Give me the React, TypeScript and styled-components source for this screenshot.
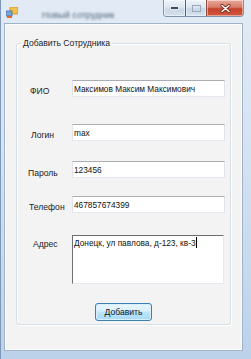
import styled, { createGlobalStyle } from 'styled-components';

const GlobalStyle = createGlobalStyle`
  html, body {
    margin: 0;
    padding: 0;
  }
  body {
    width: 251px;
    height: 359px;
    overflow: hidden;
    font-family: 'Liberation Sans', Arial, sans-serif;
    font-size: 8.6px;
  }
`;

const Window = styled.div`
  width: 251px;
  height: 359px;
  box-sizing: border-box;
  display: flex;
  flex-direction: column;
  background: linear-gradient(180deg, #e2ebf5 0%, #d6e3f1 40%, #bcd2ea 100%);
  border-left: 1px solid #7d98b8;
`;

const TitleBar = styled.div`
  height: 23px;
  display: flex;
  align-items: flex-start;
  flex-shrink: 0;
`;

const AppIcon = styled.svg`
  margin: 7px 0 0 5px;
  flex-shrink: 0;
`;

const Caption = styled.div`
  margin: 10px 0 0 24px;
  color: #56687e;
  font-size: 9px;
  filter: blur(1.3px);
  flex: 1;
`;

const CaptionButtons = styled.div`
  display: flex;
  margin-right: 7px;
  border: 1px solid #7f93ab;
  border-top: none;
  border-radius: 0 0 4px 4px;
  overflow: hidden;
  height: 16px;
`;

const CaptionButton = styled.div<{ $w: number; $close?: boolean }>`
  width: ${(p) => p.$w}px;
  height: 16px;
  display: flex;
  align-items: center;
  justify-content: center;
  box-shadow: inset 0 0 0 1px rgba(255, 255, 255, 0.45);
  background: ${(p) =>
    p.$close
      ? 'linear-gradient(180deg, #eaa99b 0%, #d87c67 45%, #c4432b 55%, #d4593d 100%)'
      : 'linear-gradient(180deg, #eef3f9 0%, #dde6f1 45%, #c8d7e8 55%, #d5e1ed 100%)'};
  & + & {
    border-left: 1px solid ${(p) => (p.$close ? '#8c4a40' : '#95a7bd')};
  }
`;

const Client = styled.div`
  flex: 1;
  margin: 0 8px 8px 3px;
  background: #f3f3f3;
  border: 1px solid #9fb3c9;
  box-shadow: inset 0 0 0 1px #fafcfe;
  display: flex;
  flex-direction: column;
`;

const GroupBox = styled.fieldset`
  margin: 13px 11px 0 11px;
  padding: 0 0 11px 0;
  height: 288px;
  box-sizing: border-box;
  border: 1px solid #d5dfe5;
  border-radius: 3px;
  box-shadow: inset 1px 1px 0 #ffffff, 1px 1px 0 #ffffff;
  display: flex;
  flex-direction: column;
`;

const Legend = styled.legend`
  margin-left: 4px;
  padding: 0 2px;
  font-size: 8.6px;
  line-height: 12px;
  color: #222;
`;

const Row = styled.div<{ $top: number }>`
  display: grid;
  grid-template-columns: 55px 153px;
  margin-top: ${(p) => p.$top}px;
`;

const Label = styled.label<{ $indent: number; $drop?: number }>`
  padding-left: ${(p) => p.$indent}px;
  padding-top: ${(p) => p.$drop ?? 5}px;
  font-size: 8.6px;
  line-height: 12px;
  color: #222;
`;

const TextBox = styled.input`
  box-sizing: border-box;
  width: 153px;
  height: 17px;
  margin: 0;
  padding: 0 1px;
  font-family: inherit;
  font-size: 8.3px;
  color: #111;
  background: #fff;
  border: 1px solid #e2e3ea;
  border-top-color: #abadb3;
  border-bottom-color: #e3e9ef;
  outline: none;
`;

const MemoBox = styled.div`
  box-sizing: border-box;
  width: 152px;
  height: 49px;
  padding: 1px 0 0 1px;
  font-size: 8.3px;
  line-height: 12px;
  color: #111;
  background: #fff;
  border: 1px solid #e3e9ef;
  border-top-color: #6e6e6e;
  border-left-color: #6e6e6e;
`;

const Caret = styled.span`
  display: inline-block;
  width: 1px;
  height: 11px;
  background: #000;
  vertical-align: -2px;
`;

const Button = styled.button`
  align-self: center;
  margin-top: 19px;
  width: 57px;
  height: 18px;
  padding: 0;
  font-family: inherit;
  font-size: 8.6px;
  color: #111;
  border: 1px solid #3c7fb1;
  border-radius: 3px;
  box-shadow: inset 0 0 0 1px #d8f0fc;
  background: linear-gradient(180deg, #eaf6fd 0%, #d9f0fc 45%, #bee6fd 50%, #a7d9f5 100%);
`;

function WinIcon() {
  return (
    <AppIcon width="12" height="11" viewBox="0 0 12 11">
      <rect x="4" y="0" width="8" height="7" fill="#f2c14e" stroke="#c98f1c" strokeWidth="0.8" />
      <rect x="0" y="4" width="6" height="5" fill="#7aa3d6" stroke="#3e6ea8" strokeWidth="0.8" />
      <rect x="1" y="9" width="5" height="2" fill="#e36a2a" />
    </AppIcon>
  );
}

export default function App() {
  return (
    <>
      <GlobalStyle />
      <Window>
        <TitleBar>
          <WinIcon />
          <Caption>Новый сотрудник</Caption>
          <CaptionButtons>
            <CaptionButton $w={21}>
              <svg width="9" height="4" viewBox="0 0 9 4">
                <rect x="0.5" y="0.5" width="8" height="3" fill="#3b4a5c" stroke="#fff" strokeWidth="0.8" />
              </svg>
            </CaptionButton>
            <CaptionButton $w={20}>
              <svg width="9" height="7" viewBox="0 0 9 7">
                <rect x="0.5" y="0.5" width="8" height="6" fill="none" stroke="#9aa9b8" strokeWidth="1" />
              </svg>
            </CaptionButton>
            <CaptionButton $w={36} $close>
              <svg width="11" height="9" viewBox="0 0 11 9">
                <path d="M2 1.5 L9 7.5 M9 1.5 L2 7.5" stroke="#6a2418" strokeWidth="3" strokeLinecap="round" />
                <path d="M2 1.5 L9 7.5 M9 1.5 L2 7.5" stroke="#fff" strokeWidth="1.6" strokeLinecap="round" />
              </svg>
            </CaptionButton>
          </CaptionButtons>
        </TitleBar>
        <Client>
          <GroupBox>
            <Legend>Добавить Сотрудника</Legend>
            <Row $top={31}>
              <Label $indent={13}>ФИО</Label>
              <TextBox readOnly value="Максимов Максим Максимович" />
            </Row>
            <Row $top={27}>
              <Label $indent={14}>Логин</Label>
              <TextBox readOnly value="max" />
            </Row>
            <Row $top={20}>
              <Label $indent={11} $drop={6}>Пароль</Label>
              <TextBox readOnly value="123456" />
            </Row>
            <Row $top={17}>
              <Label $indent={12}>Телефон</Label>
              <TextBox readOnly value="467857674399" />
            </Row>
            <Row $top={22}>
              <Label $indent={16} $drop={3}>Адрес</Label>
              <MemoBox role="textbox">
                Донецк, ул павлова, д-123, кв-3<Caret />
              </MemoBox>
            </Row>
            <Button>Добавить</Button>
          </GroupBox>
        </Client>
      </Window>
    </>
  );
}
